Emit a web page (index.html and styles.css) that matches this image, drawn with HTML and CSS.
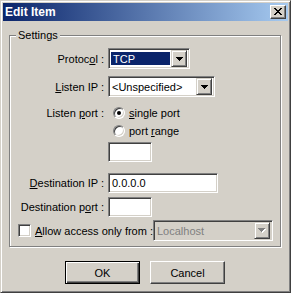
FILE: index.html
```html
<!DOCTYPE html>
<html>
    <head>
        <link rel="stylesheet" href="styles.css">
    </head>
    <body>
        <div class="window">
            <div class="titlebar">
                <span class="title">Edit Item</span>
                <span class="close">
                    <svg width="8" height="7" viewBox="0 0 8 7" shape-rendering="crispEdges">
                        <path d="M0 0h2v1h-2zM6 0h2v1h-2zM1 1h2v1h-2zM5 1h2v1h-2zM2 2h4v1h-4zM3 3h2v1h-2zM2 4h4v1h-4zM1 5h2v1h-2zM5 5h2v1h-2zM0 6h2v1h-2zM6 6h2v1h-2z" fill="#000"/>
                    </svg>
                </span>
            </div>

            <div class="content">
                <fieldset class="group">
                    <legend>Settings</legend>

                    <div class="row row-protocol">
                        <label class="lbl">Protoc<u>o</u>l :</label>
                        <div class="combo combo-protocol">
                            <span class="value selected">TCP</span>
                            <span class="drop">
                                <svg width="7" height="4" viewBox="0 0 7 4" shape-rendering="crispEdges"><path d="M0 0h7v1h-1v1h-1v1h-1v1h-1v-1h-1v-1h-1v-1h-1z" fill="#000"/></svg>
                            </span>
                        </div>
                    </div>

                    <div class="row row-listen">
                        <label class="lbl"><u>L</u>isten IP :</label>
                        <div class="combo combo-listen">
                            <span class="value">&lt;Unspecified&gt;</span>
                            <span class="drop">
                                <svg width="7" height="4" viewBox="0 0 7 4" shape-rendering="crispEdges"><path d="M0 0h7v1h-1v1h-1v1h-1v1h-1v-1h-1v-1h-1v-1h-1z" fill="#000"/></svg>
                            </span>
                        </div>
                    </div>

                    <div class="row row-single">
                        <label class="lbl">Listen <u>p</u>ort :</label>
                        <div class="radio">
                            <span class="dot checked"></span>
                            <span class="radio-text"><u>s</u>ingle port</span>
                        </div>
                    </div>

                    <div class="row row-range">
                        <span class="lbl"></span>
                        <div class="radio">
                            <span class="dot"></span>
                            <span class="radio-text">port <u>r</u>ange</span>
                        </div>
                    </div>

                    <div class="row row-port">
                        <span class="lbl"></span>
                        <div class="field field-port"></div>
                    </div>

                    <div class="row row-dest-ip">
                        <label class="lbl"><u>D</u>estination IP :</label>
                        <div class="field field-ip">0.0.0.0</div>
                    </div>

                    <div class="row row-dest-port">
                        <label class="lbl">Destination p<u>o</u>rt :</label>
                        <div class="field field-port"></div>
                    </div>

                    <div class="row row-allow">
                        <span class="check"></span>
                        <span class="check-text"><u>A</u>llow access only from :</span>
                        <div class="combo combo-allow disabled">
                            <span class="value">Localhost</span>
                            <span class="drop">
                                <svg width="8" height="5" viewBox="0 0 8 5" shape-rendering="crispEdges"><path d="M1 1h7v1h-1v1h-1v1h-1v1h-1v-1h-1v-1h-1v-1h-1z" fill="#fff"/><path d="M0 0h7v1h-1v1h-1v1h-1v1h-1v-1h-1v-1h-1v-1h-1z" fill="#808080"/></svg>
                            </span>
                        </div>
                    </div>
                </fieldset>

                <div class="buttons">
                    <button class="btn default">OK</button>
                    <button class="btn">Cancel</button>
                </div>
            </div>
        </div>
    </body>
</html>
```

FILE: styles.css
```css
body, html {
    margin: 0;
    padding: 0;
    background-color: #d4d0c8;
    font-family: 'Liberation Sans', Arial, sans-serif;
    font-size: 11px;
    color: black;
}

.window {
    box-sizing: border-box;
    width: 291px;
    height: 293px;
    padding: 2px;
    border: 1px solid;
    border-color: #d4d0c8 #404040 #404040 #d4d0c8;
    box-shadow: inset 1px 1px 0 #fff, inset -1px -1px 0 #808080;
    background-color: #d4d0c8;
}

.titlebar {
    display: flex;
    align-items: center;
    height: 18px;
    padding: 0 2px 0 2px;
    background: linear-gradient(to right, #0a246a, #a6caf0);
}

.title {
    flex: 1;
    color: white;
    font-weight: bold;
    font-size: 12px;
}

.close {
    display: flex;
    align-items: center;
    justify-content: center;
    box-sizing: border-box;
    width: 16px;
    height: 14px;
    background-color: #d4d0c8;
    border: 1px solid;
    border-color: #fff #404040 #404040 #fff;
    box-shadow: inset -1px -1px 0 #808080;
    padding-bottom: 1px;
}

.content {
    padding: 0 7px 0 6px;
}

.group {
    margin: 8px 0 0 0;
    padding: 0 0 5px 0;
    min-width: 0;
    border: 1px solid #808080;
    box-shadow: 1px 1px 0 #fff, inset 1px 1px 0 #fff;
}

.group legend {
    margin-left: 6px;
    padding: 0 2px;
    line-height: 13px;
    background-color: #d4d0c8;
}

.row {
    display: flex;
    align-items: center;
}

.lbl {
    width: 94px;
    margin-right: 4px;
    text-align: right;
    white-space: nowrap;
}

.row-protocol { margin-top: 6px; height: 21px; }
.row-listen { margin-top: 7px; height: 21px; }
.row-single { margin-top: 9px; height: 13px; }
.row-range { margin-top: 5px; height: 13px; }
.row-port { margin-top: 5px; height: 20px; }
.row-dest-ip { margin-top: 11px; height: 20px; }
.row-dest-port { margin-top: 4px; height: 20px; }
.row-allow { margin-top: 3px; height: 21px; }

.combo, .field {
    box-sizing: border-box;
    display: flex;
    align-items: center;
    background-color: white;
    border: 1px solid;
    border-color: #808080 #fff #fff #808080;
    box-shadow: inset 1px 1px 0 #404040, inset -1px -1px 0 #d4d0c8;
    padding: 2px;
}

.combo {
    height: 21px;
}

.combo-protocol { width: 82px; }
.combo-listen { width: 107px; }
.combo-allow {
    width: 120px;
    margin-left: auto;
    margin-right: 7px;
}

.combo .value {
    flex: 1;
    align-self: stretch;
    display: flex;
    align-items: center;
    padding-left: 1px;
    margin: 1px 1px 1px 0;
    white-space: nowrap;
    overflow: hidden;
}

.combo .value.selected {
    background-color: #0a246a;
    color: white;
    padding-left: 2px;
}

.drop {
    box-sizing: border-box;
    display: flex;
    align-items: center;
    justify-content: center;
    width: 16px;
    height: 17px;
    background-color: #d4d0c8;
    border: 1px solid;
    border-color: #d4d0c8 #404040 #404040 #d4d0c8;
    box-shadow: inset 1px 1px 0 #fff, inset -1px -1px 0 #808080;
}

.combo.disabled {
    background-color: #d4d0c8;
}

.combo.disabled .value {
    color: #808080;
}

.field {
    height: 20px;
    padding-left: 3px;
}

.field-port { width: 44px; }
.field-ip { width: 110px; }

.radio {
    display: flex;
    align-items: center;
    margin-left: 5px;
}

.dot {
    box-sizing: border-box;
    position: relative;
    width: 12px;
    height: 12px;
    border-radius: 50%;
    background-color: white;
    border: 1px solid;
    border-color: #808080 #fff #fff #808080;
    box-shadow: inset 1px 1px 0 #404040, inset -1px -1px 0 #d4d0c8;
}

.dot.checked::after {
    content: '';
    position: absolute;
    left: 3px;
    top: 3px;
    width: 4px;
    height: 4px;
    border-radius: 50%;
    background-color: black;
}

.radio-text {
    margin-left: 4px;
}

.check {
    box-sizing: border-box;
    width: 13px;
    height: 13px;
    margin-left: 8px;
    background-color: white;
    border: 1px solid;
    border-color: #808080 #fff #fff #808080;
    box-shadow: inset 1px 1px 0 #404040, inset -1px -1px 0 #d4d0c8;
}

.check-text {
    margin-left: 4px;
    white-space: nowrap;
}

.buttons {
    display: flex;
    justify-content: center;
    gap: 10px;
    margin-top: 14px;
}

.btn {
    box-sizing: border-box;
    width: 75px;
    height: 23px;
    padding: 0;
    font-family: 'Liberation Sans', Arial, sans-serif;
    font-size: 11px;
    color: black;
    background-color: #d4d0c8;
    border: 1px solid;
    border-color: #fff #404040 #404040 #fff;
    box-shadow: inset -1px -1px 0 #808080;
    border-radius: 0;
}

.btn.default {
    border-color: black;
    box-shadow: inset 1px 1px 0 #fff, inset -1px -1px 0 #404040, inset -2px -2px 0 #808080;
}
```
